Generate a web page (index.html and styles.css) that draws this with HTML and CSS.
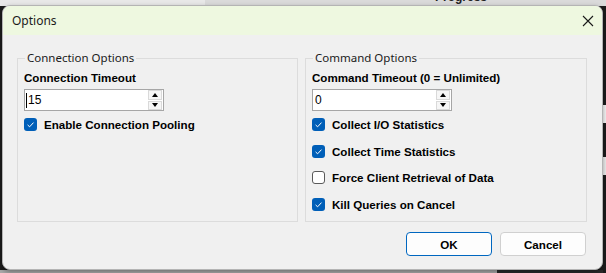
FILE: index.html
```html
<!DOCTYPE html>
<html lang="en">
  <head>
    <meta charset="UTF-8" />
    <meta name="viewport" content="width=device-width, initial-scale=1.0" />
    <title>Options</title>
    <link rel="stylesheet" href="styles.css">
  </head>
  <body>
    <div class="desktop">
      <div class="backdrop-title">Progress</div>

      <div class="dialog">
        <div class="titlebar">
          <span class="title">Options</span>
          <span class="close">
            <svg width="12" height="12" viewBox="0 0 12 12">
              <path d="M1 1 L11 11 M11 1 L1 11" stroke="#1a1a1a" stroke-width="1.1" fill="none" />
            </svg>
          </span>
        </div>

        <div class="dialog-body">
          <div class="groups">
            <fieldset class="group">
              <legend>Connection Options</legend>
              <div class="field-label">Connection Timeout</div>
              <div class="spin">
                <span class="caret"></span>
                <span class="spin-value">15</span>
                <div class="spin-buttons">
                  <span class="spin-btn up"></span>
                  <span class="spin-btn down"></span>
                </div>
              </div>
              <div class="checks">
                <div class="check">
                  <svg class="box" width="13" height="13" viewBox="0 0 13 13">
                    <rect x="0" y="0" width="13" height="13" rx="3" fill="#005fb8" />
                    <path d="M3.6 6.9 L5.6 8.8 L9.5 4.6" stroke="#fff" stroke-width="1" fill="none" />
                  </svg>
                  Enable Connection Pooling
                </div>
              </div>
            </fieldset>

            <fieldset class="group">
              <legend>Command Options</legend>
              <div class="field-label">Command Timeout (0 = Unlimited)</div>
              <div class="spin">
                <span class="spin-value">0</span>
                <div class="spin-buttons">
                  <span class="spin-btn up"></span>
                  <span class="spin-btn down"></span>
                </div>
              </div>
              <div class="checks">
                <div class="check">
                  <svg class="box" width="13" height="13" viewBox="0 0 13 13">
                    <rect x="0" y="0" width="13" height="13" rx="3" fill="#005fb8" />
                    <path d="M3.6 6.9 L5.6 8.8 L9.5 4.6" stroke="#fff" stroke-width="1" fill="none" />
                  </svg>
                  Collect I/O Statistics
                </div>
                <div class="check">
                  <svg class="box" width="13" height="13" viewBox="0 0 13 13">
                    <rect x="0" y="0" width="13" height="13" rx="3" fill="#005fb8" />
                    <path d="M3.6 6.9 L5.6 8.8 L9.5 4.6" stroke="#fff" stroke-width="1" fill="none" />
                  </svg>
                  Collect Time Statistics
                </div>
                <div class="check">
                  <svg class="box" width="13" height="13" viewBox="0 0 13 13">
                    <rect x="0.5" y="0.5" width="12" height="12" rx="2.5" fill="#fff" stroke="#5a5a5a" stroke-width="1" />
                  </svg>
                  Force Client Retrieval of Data
                </div>
                <div class="check">
                  <svg class="box" width="13" height="13" viewBox="0 0 13 13">
                    <rect x="0" y="0" width="13" height="13" rx="3" fill="#005fb8" />
                    <path d="M3.6 6.9 L5.6 8.8 L9.5 4.6" stroke="#fff" stroke-width="1" fill="none" />
                  </svg>
                  Kill Queries on Cancel
                </div>
              </div>
            </fieldset>
          </div>

          <div class="buttons">
            <button class="btn default">OK</button>
            <button class="btn">Cancel</button>
          </div>
        </div>
      </div>
    </div>
  </body>
</html>
```

FILE: styles.css
```css
* {
  box-sizing: border-box;
}

body {
  margin: 0;
  font-family: "Liberation Sans", Arial, sans-serif;
  font-size: 11.6px;
  color: #000;
}

.desktop {
  position: relative;
  width: 606px;
  height: 273px;
  overflow: hidden;
  padding: 5px 0 0 2px;
  background:
    linear-gradient(to right, #e8e8e8 205px, #dadada 205px) 0 0 / 100% 6px no-repeat,
    linear-gradient(to bottom, #1c1c1c 105px, #f4f4f4 105px 123px, #1c1c1c 123px 157px, #ececec 157px 175px, #1c1c1c 175px) 603px 0 / 3px 100% no-repeat,
    linear-gradient(to right, #a9a9a9 497px, #2a2a2a 497px) 0 270px / 100% 3px no-repeat,
    #1c1c1c;
}

.backdrop-title {
  position: absolute;
  top: -10px;
  left: 435px;
  font-weight: bold;
  font-size: 12px;
  color: #222;
}

.dialog {
  position: relative;
  width: 601px;
  height: 265px;
  border: 1px solid #b4b4b4;
  border-radius: 8px;
  background-color: #f0f0f0;
  overflow: hidden;
  box-shadow: 0 2px 5px rgba(0, 0, 0, 0.35);
}

.titlebar {
  height: 29px;
  background-color: #eef8e0;
  display: flex;
  align-items: center;
  justify-content: space-between;
  padding: 0 8px 0 9px;
}

.title {
  font-family: "Noto Sans", sans-serif;
  font-size: 12px;
  color: #1a1a1a;
}

.close {
  display: flex;
}

.dialog-body {
  padding: 15px 14px 0 14px;
}

.groups {
  display: grid;
  grid-template-columns: 281px 282px;
  gap: 7px;
}

.group {
  margin: 0;
  height: 172px;
  border: 1px solid #dcdcdc;
  padding: 5px 6px 0 6px;
  min-width: 0;
}

.group legend {
  font-family: "Noto Sans", sans-serif;
  font-size: 11.5px;
  line-height: 16px;
  padding: 0 2px;
  margin-left: 1px;
  color: #1a1a1a;
}

.field-label {
  font-weight: bold;
  line-height: 13px;
}

.spin {
  margin-top: 5px;
  width: 140px;
  height: 22px;
  border: 1px solid #a6a6a6;
  background-color: #fff;
  display: flex;
  align-items: center;
  padding: 0 1px 0 1px;
}

.caret {
  width: 1px;
  height: 15px;
  background-color: #000;
}

.spin-value {
  padding-left: 1px;
  font-size: 12px;
}

.spin-buttons {
  margin-left: auto;
  width: 14px;
  height: 20px;
  display: flex;
  flex-direction: column;
  gap: 1px;
}

.spin-btn {
  flex: 1;
  border: 1px solid #d9d9d9;
  background-color: #f6f6f6;
  display: flex;
  align-items: center;
  justify-content: center;
}

.spin-btn::after {
  content: "";
  width: 0;
  height: 0;
  border-left: 3px solid transparent;
  border-right: 3px solid transparent;
}

.spin-btn.up::after {
  border-bottom: 4px solid #000;
}

.spin-btn.down::after {
  border-top: 4px solid #000;
}

.checks {
  margin-top: 7px;
  display: flex;
  flex-direction: column;
  gap: 13.6px;
}

.check {
  display: flex;
  align-items: center;
  gap: 7px;
  height: 13px;
  font-weight: bold;
}

.box {
  flex: 0 0 13px;
}

.buttons {
  margin-top: 10px;
  margin-right: 2px;
  display: flex;
  justify-content: flex-end;
  gap: 8px;
}

.btn {
  width: 86px;
  height: 24px;
  font-family: "Liberation Sans", Arial, sans-serif;
  font-size: 11.6px;
  font-weight: bold;
  color: #000;
  background-color: #fdfdfd;
  border: 1px solid #d0d0d0;
  border-radius: 4px;
  padding: 0;
}

.btn.default {
  border-color: #0067c0;
}
```
